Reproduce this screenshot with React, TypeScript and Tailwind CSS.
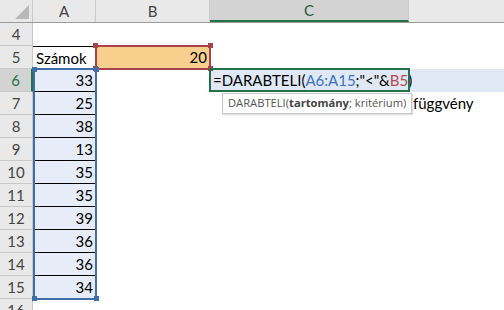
const rows = [
  { n: 4, a: "" },
  { n: 5, a: "Számok" },
  { n: 6, a: "33" },
  { n: 7, a: "25" },
  { n: 8, a: "38" },
  { n: 9, a: "13" },
  { n: 10, a: "35" },
  { n: 11, a: "35" },
  { n: 12, a: "39" },
  { n: 13, a: "36" },
  { n: 14, a: "36" },
  { n: 15, a: "34" },
  { n: 16, a: "" },
];

const Corner = ({ className }: { className: string }) => (
  <div className={`absolute w-[5px] h-[5px] ${className}`} />
);

export default function App() {
  return (
    <div className="relative w-[504px] h-[310px] overflow-hidden bg-white text-[15px] text-black font-['Lato','Liberation_Sans',sans-serif]">
      {/* column headers */}
      <div className="flex h-[23px] border-b border-[#9b9b9b] bg-[#e9e9e9] text-[#444] text-[15px]">
        <div className="relative w-[33px] shrink-0 border-r border-[#c8c8c8]">
          <div className="absolute right-[3px] bottom-[3px] w-0 h-0 border-l-[14px] border-l-transparent border-b-[14px] border-b-[#b8b8b8]" />
        </div>
        <div className="w-[63px] shrink-0 flex items-center justify-center border-r border-[#c8c8c8]">A</div>
        <div className="w-[114px] shrink-0 flex items-center justify-center border-r border-[#c8c8c8]">B</div>
        <div className="w-[199px] shrink-0 flex items-center justify-center bg-[#d3d3d3] border-b-2 border-[#217346] text-[#2a5a3c] border-r border-r-[#c8c8c8]">C</div>
        <div className="flex-1 bg-[#e9e9e9]" />
      </div>

      {rows.map((r) => {
        const active = r.n === 6;
        const inRange = r.n >= 6 && r.n <= 15;
        return (
          <div key={r.n} className="flex h-[23px]">
            <div
              className={`w-[33px] shrink-0 flex items-center justify-center border-b border-r text-[15px] ${
                active
                  ? "bg-[#d3d3d3] text-[#217346] border-r-2 border-r-[#217346] border-b-[#c8c8c8]"
                  : "bg-[#e9e9e9] text-[#444] border-[#c8c8c8]"
              }`}
            >
              {r.n}
            </div>
            <div
              className={`w-[63px] shrink-0 flex items-center px-[3px] ${
                r.n === 5 ? "justify-start border-t border-black" : "justify-end"
              } ${inRange ? "bg-[#e6edf8]" : ""} ${r.n >= 6 && r.n <= 14 ? "border-b border-b-black" : ""}`}
            >
              {r.a}
            </div>
            <div className="w-[114px] shrink-0" />
            {active ? (
              <div className="flex-1 flex items-center bg-[#dfe8f4] pl-[3px] whitespace-nowrap">
                <span>=DARABTELI(</span>
                <span className="text-[#3b73bf]">A6:A15</span>
                <span>;"&lt;"&amp;</span>
                <span className="text-[#b8494c]">B5</span>
                <span>)</span>
              </div>
            ) : r.n === 7 ? (
              <div className="flex-1 flex items-center pl-[203px] whitespace-nowrap">függvény</div>
            ) : (
              <div className="flex-1" />
            )}
          </div>
        );
      })}

      {/* B5 reference highlight */}
      <div className="absolute left-[95px] top-[45px] w-[116px] h-[25px] border-2 border-[#a9424a] bg-[#f9cf8e] flex items-center justify-end px-[2px]">20</div>
      <Corner className="left-[93px] top-[43px] bg-[#a9424a]" />
      <Corner className="left-[208px] top-[43px] bg-[#a9424a]" />
      <Corner className="left-[93px] top-[66px] bg-[#a9424a]" />
      <Corner className="left-[208px] top-[66px] bg-[#a9424a]" />

      {/* A6:A15 range highlight */}
      <div className="absolute left-[33px] top-[68px] w-[64px] h-[232px] border-2 border-[#3f6ea8] pointer-events-none" />
      <Corner className="left-[32px] top-[67px] bg-[#3f6ea8]" />
      <Corner className="left-[94px] top-[67px] bg-[#3f6ea8]" />
      <Corner className="left-[32px] top-[296px] bg-[#3f6ea8]" />
      <Corner className="left-[94px] top-[296px] bg-[#3f6ea8]" />

      {/* active cell C6 */}
      <div className="absolute left-[209px] top-[68px] w-[201px] h-[24px] border-2 border-[#217346] pointer-events-none" />

      {/* function tooltip */}
      <div className="absolute left-[222px] top-[93px] h-[21px] px-[5px] flex items-center bg-white border border-[#c6c6c6] shadow-[1px_1px_1px_rgba(0,0,0,0.12)] text-[11.2px] text-[#555] whitespace-nowrap font-['Open_Sans','Liberation_Sans',sans-serif]">
        DARABTELI(<span className="font-bold text-[#444]">tartomány</span>; kritérium)
      </div>
    </div>
  );
}
